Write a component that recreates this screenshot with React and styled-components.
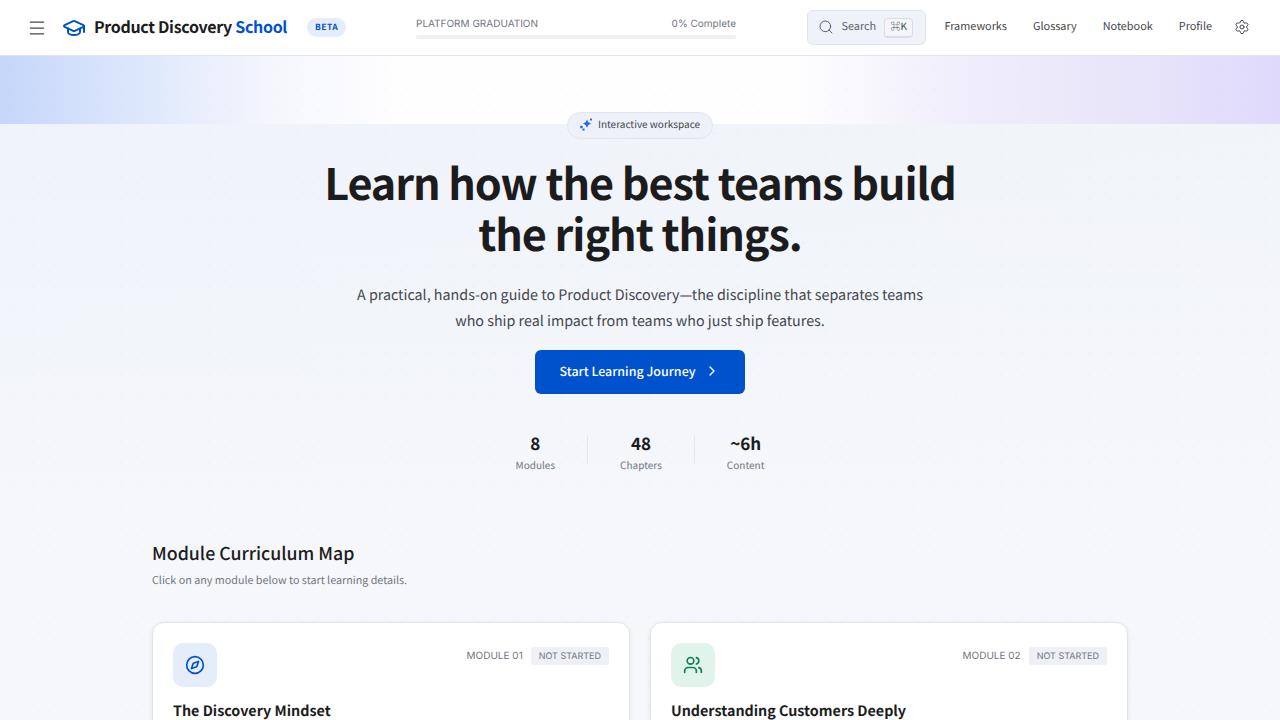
import React from "react";
import styled, { createGlobalStyle } from "styled-components";
import { Menu, GraduationCap, Search, Settings, ChevronRight, Compass, Users } from "lucide-react";

const CJK = `"Noto Sans CJK SC", "Noto Sans", sans-serif`;
const INTER = `Inter, "Liberation Sans", sans-serif`;

const Global = createGlobalStyle`
  html, body { margin: 0; padding: 0; height: 720px; overflow: hidden; }
  body { font-family: ${CJK}; background: #f5f7fb; color: #1c1c1e; text-rendering: geometricPrecision; }
  * { box-sizing: border-box; }
`;

const Header = styled.header`
  height: 56px;
  display: flex;
  align-items: center;
  padding: 0 30px 0 27px;
  background: #fff;
  border-bottom: 1px solid #e3e6ea;
`;

const Brand = styled.div`
  display: flex;
  align-items: center;
  width: 389px;
  flex: none;
`;

const MenuButton = styled.span`
  display: flex;
  color: #44474e;
  margin-right: 15px;
`;

const BrandName = styled.span`
  font-size: 16px;
  line-height: 22px;
  font-weight: 700;
  margin-left: 8px;
  padding-bottom: 3px;
  letter-spacing: -0.32px;
  white-space: nowrap;
  color: #1c1c1e;
`;

const BrandAccent = styled.span`
  color: #0052cc;
`;

const Beta = styled.span`
  margin-left: 20px;
  width: 39px;
  height: 19px;
  display: flex;
  align-items: center;
  justify-content: center;
  padding-bottom: 2px;
  border-radius: 10px;
  background: #e6edfa;
  color: #0052cc;
  font-size: 8.5px;
  line-height: 12px;
  font-weight: 700;
  letter-spacing: 0.4px;
`;

const Progress = styled.div`
  width: 320px;
  flex: none;
`;

const ProgressLabels = styled.div`
  display: flex;
  justify-content: space-between;
  font-family: ${INTER};
  font-size: 10px;
  line-height: 14px;
  color: #72767f;
  padding-top: 1px;
  margin-bottom: 4px;
`;

const Track = styled.div`
  height: 4px;
  border-radius: 2px;
  background: #eef0f6;
`;

const Nav = styled.nav`
  margin-left: auto;
  display: flex;
  align-items: center;
`;

const SearchBox = styled.div`
  width: 119px;
  height: 35px;
  display: flex;
  align-items: center;
  padding-left: 10px;
  background: #eff2f8;
  border: 1px solid #e1e5ee;
  border-radius: 6px;
  color: #5c6068;
  font-size: 10.88px;
  line-height: 16px;
  margin-right: 18px;
`;

const SearchIcon = styled(Search)`
  margin-bottom: 1px;
`;

const SearchLabel = styled.span`
  margin-left: 7px;
  padding-bottom: 4px;
`;

const Kbd = styled.kbd`
  margin-left: 8px;
  width: 29px;
  height: 20px;
  display: flex;
  align-items: center;
  justify-content: center;
  padding-bottom: 3px;
  font-family: ${CJK};
  font-size: 10px;
  background: #f3f5fa;
  border: 1px solid #d9dde5;
  border-bottom-width: 2px;
  border-radius: 4px;
  color: #4c5058;
`;

const NavLink = styled.a`
  font-size: 10.88px;
  color: #44474e;
  margin-right: 26px;
  line-height: 16px;
  padding-bottom: 4px;
  &:nth-last-child(2) { margin-right: 22px; }
`;

const Gear = styled.span`
  display: flex;
  color: #44474e;
  margin-bottom: 1px;
`;

const Main = styled.main`
  height: 664px;
  overflow: hidden;
  background-color: #f5f7fb;
  background-image:
    radial-gradient(rgba(110,120,150,.03) 1px, transparent 1.2px),
    linear-gradient(90deg, #c5d6fa 0%, #dbe6fb 10%, #f5f6fd 21%, #fefeff 31%, #fefeff 62%, #f0eefb 75%, #e8e5fa 88%, #dfdafb 100%),
    linear-gradient(180deg, rgba(245,247,251,0) 0%, #f5f7fb 70%),
    linear-gradient(90deg, #eef2fb 0%, #f1f4f8 100%);
  background-size: 22px 22px, 100% 68px, 100% 100%, 100% 100%;
  background-repeat: repeat, no-repeat, no-repeat, no-repeat;
`;

const Hero = styled.section`
  display: flex;
  flex-direction: column;
  align-items: center;
  padding-top: 56px;
`;

const Chip = styled.div`
  height: 27px;
  padding: 0 12px 3px;
  display: flex;
  align-items: center;
  gap: 4px;
  border-radius: 14px;
  background: #eef1f9;
  border: 1px solid #e1e5ee;
  font-size: 10px;
  line-height: 14px;
  color: #44474e;
`;

const Title = styled.h1`
  margin: 18px 0 0;
  font-size: 43.2px;
  line-height: 51px;
  font-weight: 700;
  letter-spacing: -1.08px;
  text-align: center;
  color: #1c1c1e;
`;

const Lead = styled.p`
  margin: 23px 0 0;
  width: 580px;
  font-size: 14.3px;
  line-height: 26px;
  text-align: center;
  color: #44474e;
`;

const Cta = styled.button`
  margin-top: 16px;
  width: 210px;
  height: 44px;
  display: flex;
  align-items: center;
  justify-content: center;
  gap: 9px;
  padding: 0 0 2px;
  border: 0;
  border-radius: 6px;
  background: #0052cc;
  color: #fff;
  font-family: ${CJK};
  font-size: 12.48px;
  line-height: 16px;
  font-weight: 500;
  text-rendering: geometricPrecision;
`;

const Stats = styled.div`
  margin-top: 42px;
  display: flex;
  align-items: center;
`;

const Stat = styled.div`
  display: flex;
  flex-direction: column;
  align-items: center;
  padding: 0 32px;
  border-left: ${p => (p.$first ? "0" : "1px solid #e3e6ea")};
  height: 28px;
  justify-content: center;
`;

const StatValue = styled.span`
  font-size: 17px;
  line-height: 24px;
  font-weight: 700;
  margin-top: 3px;
  color: #1c1c1e;
`;

const StatLabel = styled.span`
  font-size: 10px;
  line-height: 14px;
  margin-top: 3px;
  color: #72767f;
`;

const Section = styled.section`
  width: 976px;
  margin: 77px auto 0;
`;

const SectionTitle = styled.h2`
  margin: 0;
  font-size: 17.76px;
  line-height: 24px;
  font-weight: 500;
  color: #1c1c1e;
`;

const SectionSub = styled.p`
  margin: 8px 0 0;
  font-size: 10.75px;
  line-height: 15px;
  color: #72767f;
`;

const Grid = styled.div`
  margin-top: 34px;
  display: grid;
  grid-template-columns: 478px 478px;
  gap: 20px;
`;

const Card = styled.article`
  background: #fff;
  border: 1px solid #e2e5ea;
  border-radius: 12px;
  padding: 20px;
  height: 260px;
  box-shadow: 0 1px 4px rgba(30,40,70,.08);
`;

const CardTop = styled.div`
  display: flex;
  justify-content: space-between;
  align-items: flex-start;
`;

const IconTile = styled.div`
  width: 44px;
  height: 44px;
  border-radius: 10px;
  display: flex;
  align-items: center;
  justify-content: center;
  background: ${p => p.$bg};
  color: ${p => p.$fg};
`;

const Meta = styled.div`
  display: flex;
  align-items: center;
  gap: 8px;
  margin-top: 4px;
  font-family: ${INTER};
`;

const ModuleNo = styled.span`
  font-size: 10px;
  color: #72767f;
`;

const Status = styled.span`
  height: 18px;
  padding: 0 8px;
  display: flex;
  align-items: center;
  border-radius: 3px;
  background: #eef0f6;
  font-size: 9px;
  color: #72767f;
`;

const CardTitle = styled.h3`
  margin: 13px 0 0;
  font-size: 14.3px;
  line-height: 22px;
  font-weight: 700;
  color: #1c1c1e;
`;

const Sparkle = () => (
  <svg width="14" height="14" viewBox="1 0 14 14" fill="#2a6ae0">
    <path d="M8 2.5 L9.4 5.2 L12.2 6.6 L9.4 8 L8 10.7 L6.6 8 L3.8 6.6 L6.6 5.2 Z" />
    <rect x="11" y="1.5" width="2" height="2" rx=".5" />
    <rect x="1.2" y="8.8" width="2.4" height="2.4" rx=".5" />
    <rect x="3.4" y="11.4" width="2.2" height="2.2" rx=".5" />
  </svg>
);

export default function App() {
  return (
    <>
      <Global />
      <Header>
        <Brand>
          <MenuButton><Menu size={20} strokeWidth={1.5} /></MenuButton>
          <GraduationCap size={24} color="#0052cc" strokeWidth={2} />
          <BrandName>Product Discovery <BrandAccent>School</BrandAccent></BrandName>
          <Beta>BETA</Beta>
        </Brand>
        <Progress>
          <ProgressLabels><span>PLATFORM GRADUATION</span><span>0% Complete</span></ProgressLabels>
          <Track />
        </Progress>
        <Nav>
          <SearchBox>
            <SearchIcon size={16} strokeWidth={1.5} />
            <SearchLabel>Search</SearchLabel>
            <Kbd>⌘K</Kbd>
          </SearchBox>
          <NavLink>Frameworks</NavLink>
          <NavLink>Glossary</NavLink>
          <NavLink>Notebook</NavLink>
          <NavLink>Profile</NavLink>
          <Gear><Settings size={16} strokeWidth={1.5} /></Gear>
        </Nav>
      </Header>
      <Main>
        <Hero>
          <Chip><Sparkle />Interactive workspace</Chip>
          <Title>Learn how the best teams build<br />the right things.</Title>
          <Lead>A practical, hands-on guide to Product Discovery—the discipline that separates teams who ship real impact from teams who just ship features.</Lead>
          <Cta>Start Learning Journey <ChevronRight size={16} /></Cta>
          <Stats>
            <Stat $first><StatValue>8</StatValue><StatLabel>Modules</StatLabel></Stat>
            <Stat><StatValue>48</StatValue><StatLabel>Chapters</StatLabel></Stat>
            <Stat><StatValue>~6h</StatValue><StatLabel>Content</StatLabel></Stat>
          </Stats>
        </Hero>
        <Section>
          <SectionTitle>Module Curriculum Map</SectionTitle>
          <SectionSub>Click on any module below to start learning details.</SectionSub>
          <Grid>
            <Card>
              <CardTop>
                <IconTile $bg="#e6edfa" $fg="#0052cc"><Compass size={20} /></IconTile>
                <Meta><ModuleNo>MODULE 01</ModuleNo><Status>NOT STARTED</Status></Meta>
              </CardTop>
              <CardTitle>The Discovery Mindset</CardTitle>
            </Card>
            <Card>
              <CardTop>
                <IconTile $bg="#e1f4ec" $fg="#0b7f56"><Users size={20} /></IconTile>
                <Meta><ModuleNo>MODULE 02</ModuleNo><Status>NOT STARTED</Status></Meta>
              </CardTop>
              <CardTitle>Understanding Customers Deeply</CardTitle>
            </Card>
          </Grid>
        </Section>
      </Main>
    </>
  );
}
